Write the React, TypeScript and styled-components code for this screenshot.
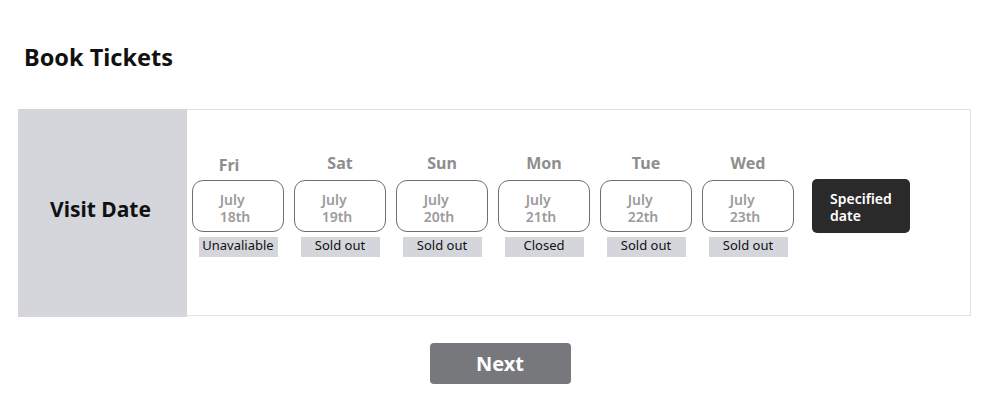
import React from 'react';
import styled, { createGlobalStyle } from 'styled-components';

const GlobalStyle = createGlobalStyle`
  html, body {
    margin: 0;
    padding: 0;
    background: #ffffff;
  }
  body {
    font-family: 'Noto Sans', 'Open Sans', sans-serif;
    color: #111111;
  }
`;

const Page = styled.div`
  width: 1000px;
`;

const Title = styled.h1`
  margin: 0 0 0 24px;
  padding-top: 41px;
  font-size: 23.5px;
  line-height: 32px;
  font-weight: 700;
`;

const Card = styled.section`
  display: flex;
  width: 953px;
  height: 207px;
  margin: 36px 0 0 18px;
  border: 1.5px solid #e0e1e4;
  border-left: none;
  box-sizing: border-box;
`;

const FieldLabel = styled.div`
  width: 169px;
  flex: none;
  display: flex;
  align-items: center;
  justify-content: center;
  padding: 0 4px 8px 0;
  box-sizing: border-box;
  background: #d4d6dc;
  font-size: 21px;
  font-weight: 700;
  margin-top: -1.5px;
  margin-bottom: -1.5px;
`;

const DayRow = styled.div`
  display: flex;
  align-items: flex-start;
  gap: 10px;
  padding: 42px 0 0 5px;
`;

const DayColumn = styled.div`
  width: 92px;
  display: flex;
  flex-direction: column;
  align-items: center;
`;

const DayName = styled.div<{ $shift?: number }>`
  height: 22px;
  line-height: 22px;
  font-size: 16px;
  font-weight: 700;
  color: #8e8e8e;
  margin-bottom: 6px;
  transform: translate(${(p) => p.$shift ?? 0}px, ${(p) => (p.$shift ? 2 : 0)}px);
`;

const DateBox = styled.button`
  width: 92px;
  height: 52px;
  display: flex;
  align-items: center;
  justify-content: center;
  padding: 3px 6px 0 0;
  border: 1.5px solid #6f6f6f;
  border-radius: 11px;
  background: #ffffff;
  font-family: inherit;
  box-sizing: border-box;
  cursor: pointer;
`;

const DateText = styled.span`
  display: inline-block;
  text-align: left;
  font-size: 14px;
  line-height: 17px;
  font-weight: 600;
  color: #9b9b9b;
`;

const Status = styled.div`
  width: 79px;
  height: 20px;
  margin-top: 5px;
  background: #d4d6dc;
  text-align: center;
  font-size: 13px;
  line-height: 16px;
  color: #111111;
`;

const SpecifiedButton = styled.button`
  width: 98px;
  height: 54px;
  margin: 27px 0 0 8px;
  padding: 2px 0 0 18px;
  border: none;
  border-radius: 5px;
  background: #2b2a2b;
  color: #ffffff;
  font-family: inherit;
  font-size: 14px;
  line-height: 17px;
  font-weight: 600;
  text-align: left;
  box-sizing: border-box;
  cursor: pointer;
`;

const Footer = styled.div`
  display: flex;
  justify-content: center;
  padding-top: 27px;
`;

const NextButton = styled.button`
  width: 141px;
  height: 41px;
  border: none;
  border-radius: 4px;
  background: #77787c;
  color: #ffffff;
  font-family: inherit;
  font-size: 20px;
  font-weight: 700;
  cursor: pointer;
`;

type Day = {
  name: string;
  date: string;
  status: string;
  shift?: number;
};

const days: Day[] = [
  { name: 'Fri', date: '18th', status: 'Unavaliable', shift: -9 },
  { name: 'Sat', date: '19th', status: 'Sold out' },
  { name: 'Sun', date: '20th', status: 'Sold out' },
  { name: 'Mon', date: '21th', status: 'Closed' },
  { name: 'Tue', date: '22th', status: 'Sold out' },
  { name: 'Wed', date: '23th', status: 'Sold out' },
];

export default function App() {
  return (
    <>
      <GlobalStyle />
      <Page>
        <Title>Book Tickets</Title>
        <Card>
          <FieldLabel>Visit Date</FieldLabel>
          <DayRow>
            {days.map((d) => (
              <DayColumn key={d.name}>
                <DayName $shift={d.shift}>{d.name}</DayName>
                <DateBox>
                  <DateText>
                    July
                    <br />
                    {d.date}
                  </DateText>
                </DateBox>
                <Status>{d.status}</Status>
              </DayColumn>
            ))}
            <SpecifiedButton>
              Specified
              <br />
              date
            </SpecifiedButton>
          </DayRow>
        </Card>
        <Footer>
          <NextButton>Next</NextButton>
        </Footer>
      </Page>
    </>
  );
}
